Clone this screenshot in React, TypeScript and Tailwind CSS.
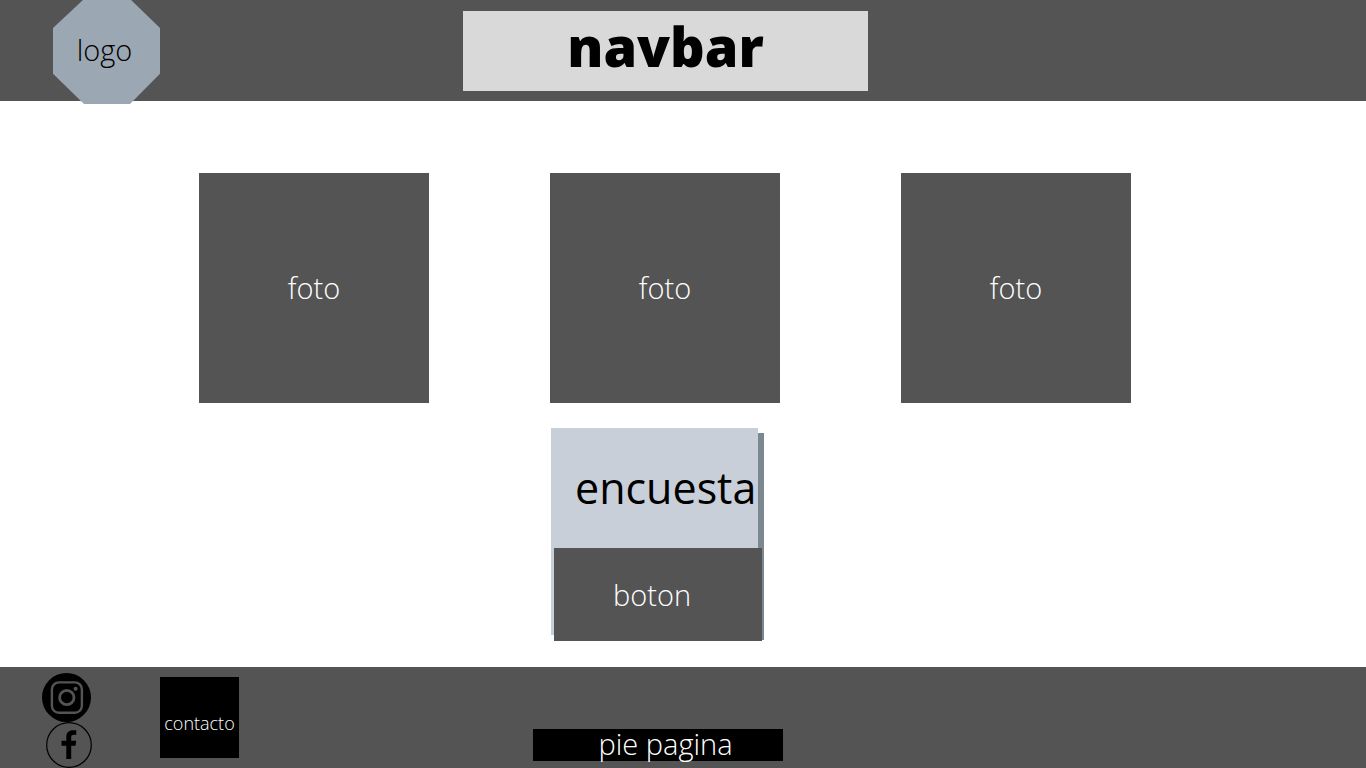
const photos = ["foto", "foto", "foto"];

function InstagramIcon() {
  return (
    <svg viewBox="0 0 49 49" className="h-[49px] w-[49px]" aria-hidden="true">
      <circle cx="24.5" cy="24.5" r="24.5" fill="#000" />
      <g fill="none" stroke="#545454" strokeWidth="2.4">
        <rect x="9.9" y="9.4" width="30" height="30.4" rx="7" />
        <circle cx="24.8" cy="24.5" r="7.2" strokeWidth="2.8" />
      </g>
      <circle cx="33.6" cy="15.8" r="2" fill="#545454" />
    </svg>
  );
}

function FacebookIcon() {
  return (
    <svg viewBox="0 0 46 46" className="h-[46px] w-[46px]" aria-hidden="true">
      <circle cx="23" cy="23" r="22.3" fill="none" stroke="#000" strokeWidth="1.2" />
      <path
        d="M20.3 37V23.8h-4.8v-5h4.8v-3.6c0-4.8 2.7-6.9 6.6-6.9h3.4v4.5h-2.4c-2 0-2.7 1-2.7 2.6v3.4h5l-.7 5h-4.3V37z"
        fill="#000"
      />
    </svg>
  );
}

export default function App() {
  return (
    <div className="flex min-h-screen flex-col bg-white font-['Open_Sans',sans-serif] text-black">
      <header className="grid h-[101px] grid-cols-[1fr_auto_1fr] items-start bg-[#545454] pr-[35px]">
        <a href="#" className="ml-[53px] block h-[104px] w-[107px]">
          <span className="flex h-full items-center justify-center bg-[#9ba7b3] pr-1 pb-1 text-[29px] font-light [clip-path:polygon(28%_0,73%_0,100%_27%,100%_71%,72%_100%,29%_100%,0_71%,0_27%)]">
            logo
          </span>
        </a>
        <nav className="mt-[11px] flex h-20 w-[405px] justify-center bg-[#d9d9d9]">
          <h1 className="text-[54px] leading-[70px] font-extrabold">navbar</h1>
        </nav>
      </header>

      <main className="flex flex-1 flex-col items-center pt-[72px] pr-[36px] pb-[26px]">
        <div className="flex gap-[121px]">
          {photos.map((label, index) => (
            <div
              key={index}
              className="flex h-[230px] w-[230px] items-center justify-center bg-[#545454] text-[29px] font-light text-white"
            >
              {label}
            </div>
          ))}
        </div>

        <section className="mt-[25px] w-[230px]">
          <div className="ml-px h-[207px] w-[207px] bg-[#c8cfd8] shadow-[6px_5px_0_#7b8891]">
            <h2 className="flex h-[120px] items-center pl-6 text-[43px]">encuesta</h2>
            <button
              type="button"
              className="ml-[3px] h-[93px] w-[208px] bg-[#545454] pr-3 text-[29px] font-light text-white"
            >
              boton
            </button>
          </div>
        </section>
      </main>

      <footer className="grid h-[101px] grid-cols-[1fr_auto_1fr] items-start bg-[#545454] pr-[50px]">
        <div className="flex items-start">
          <div className="ml-[42px] flex w-[50px] flex-col pt-[6px]">
            <a href="#" aria-label="Instagram">
              <InstagramIcon />
            </a>
            <a href="#" aria-label="Facebook" className="self-end">
              <FacebookIcon />
            </a>
          </div>
          <a
            href="#"
            className="mt-[10px] ml-[68px] flex h-[81px] w-[79px] items-center justify-center bg-black pt-[10px] text-lg font-light text-white"
          >
            contacto
          </a>
        </div>
        <p className="mt-[62px] h-8 w-[250px] bg-black pl-[15px] text-center text-[29px] leading-[30px] font-light text-white">
          pie pagina
        </p>
      </footer>
    </div>
  );
}
